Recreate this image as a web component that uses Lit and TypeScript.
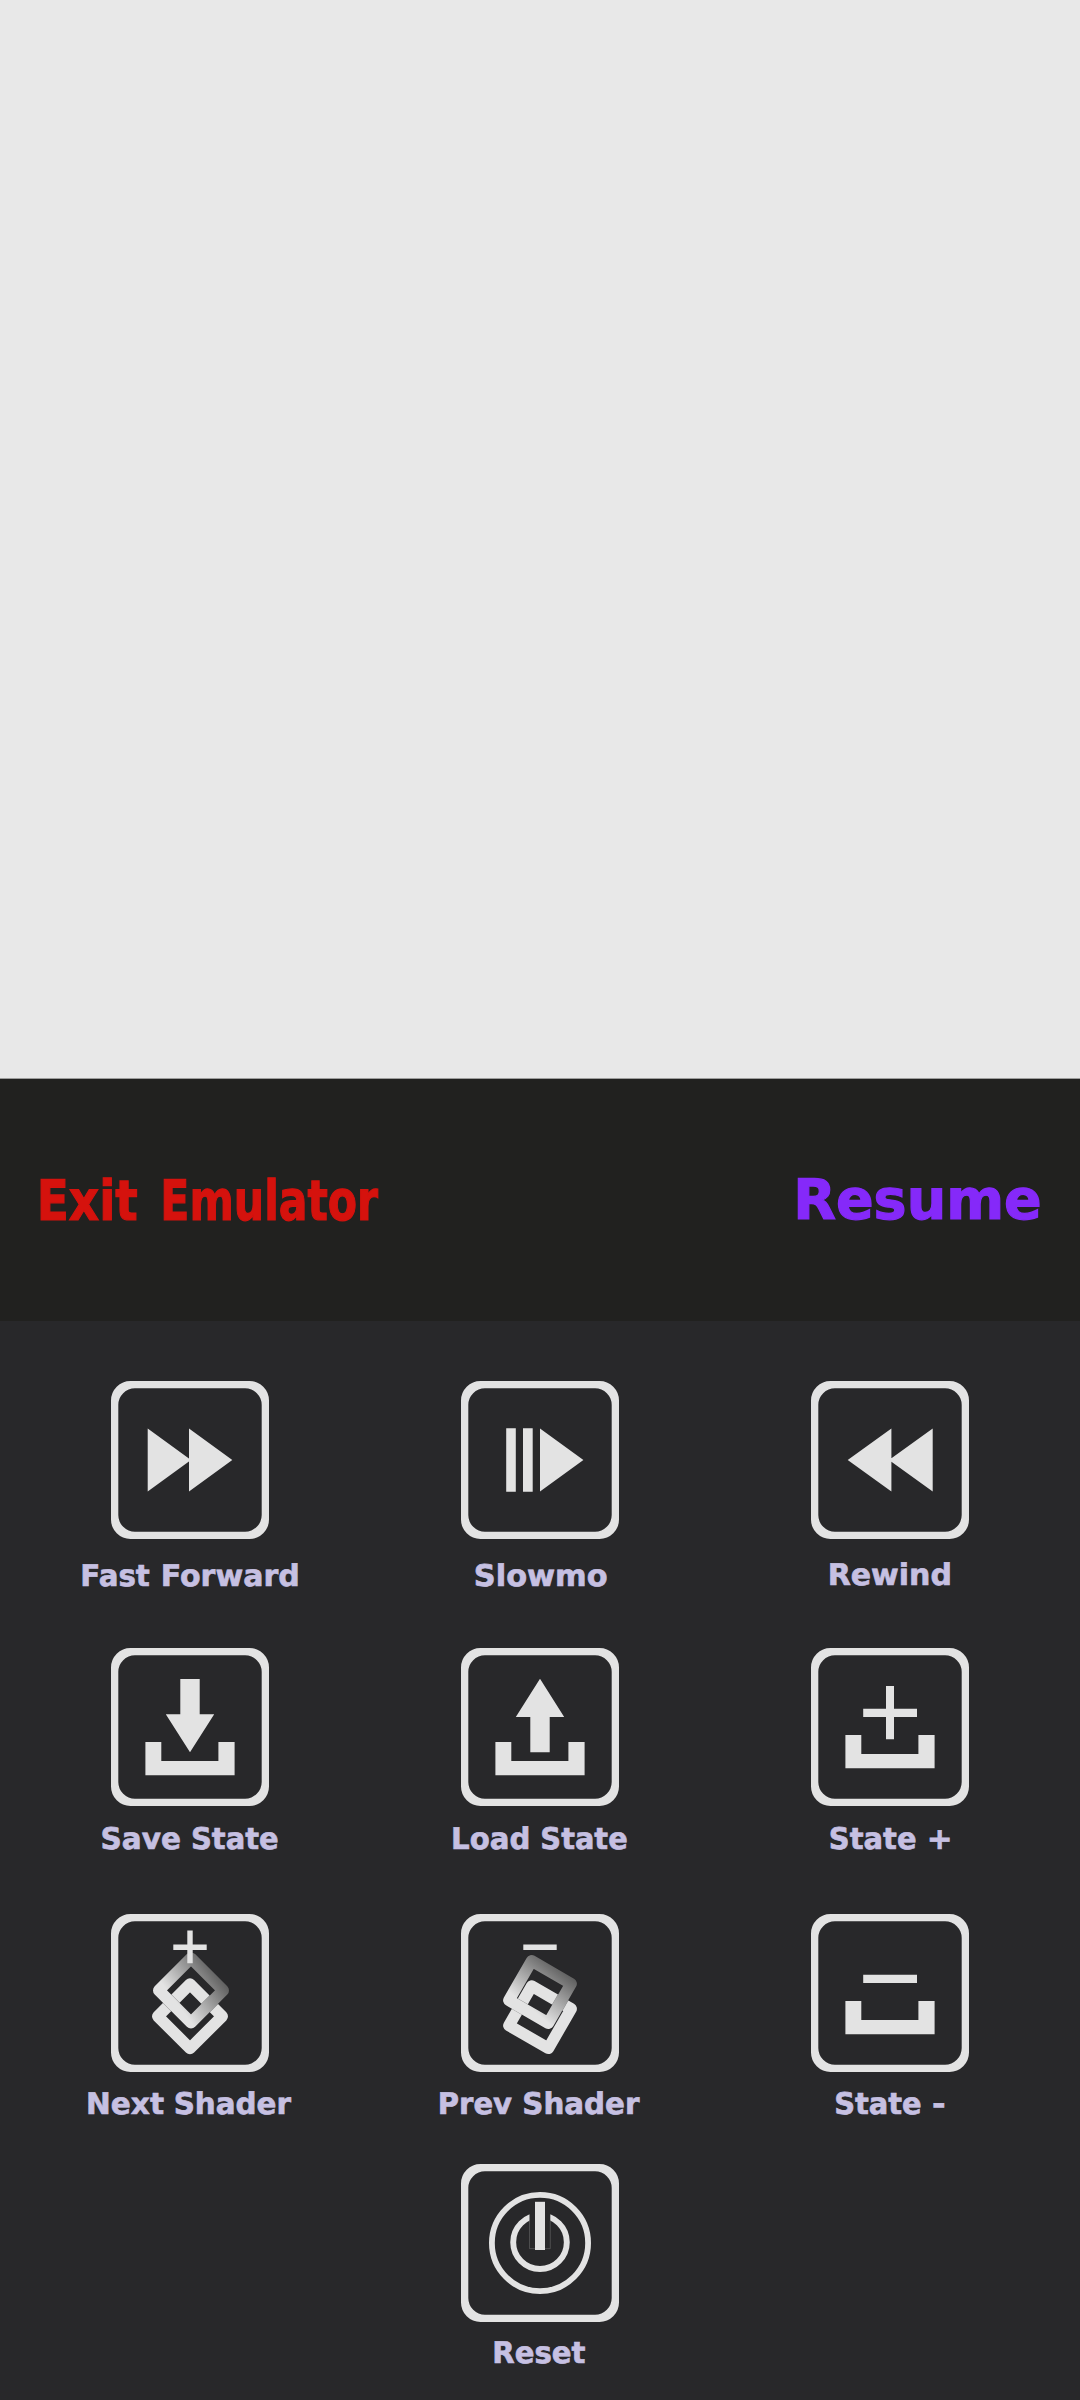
import { LitElement, html, css, svg, nothing, SVGTemplateResult } from "lit";
import { customElement, property } from "lit/decorators.js";

const FAMILY = '"DejaVu Sans", Verdana, sans-serif';

/** One word whose ink spans from x0 to x1. */
interface Run {
  text: string;
  x0: number;
  x1: number;
}

interface Command {
  icon: string;
  runs: Run[];
  baseline: number;
}

const pen = document.createElement("canvas").getContext("2d")!;

/** Distance of the ink's edges from the origin, in ems. */
function inkOf(text: string): [number, number] {
  pen.font = `bold 200px ${FAMILY}`;
  const m = pen.measureText(text);
  return [m.actualBoundingBoxLeft / 200, m.actualBoundingBoxRight / 200];
}

function drawRun(run: Run, size: number, baseline: number): SVGTemplateResult {
  const [left, right] = inkOf(run.text);
  const weight = size * 0.022;
  const inset = weight / 2 + size * 0.012;
  const scale = (run.x1 - run.x0 - inset * 2) / ((left + right) * size);
  const x = run.x0 + inset + left * size * scale;
  return svg`<text
    font-size=${size}
    stroke-width=${weight}
    transform=${`translate(${x} ${baseline - weight / 2}) scale(${scale} 1)`}
  >${run.text} </text>`;
}

@customElement("fitted-text")
export class FittedText extends LitElement {
  @property({ attribute: false }) runs: Run[] = [];
  @property({ type: Number }) width = 100;
  @property({ type: Number }) height = 40;
  @property({ type: Number }) size = 30;
  @property({ type: Number }) baseline = 30;

  static styles = css`
    :host {
      display: block;
    }
    .line {
      display: block;
      overflow: visible;
      fill: currentColor;
      stroke: currentColor;
      font-family: "DejaVu Sans", Verdana, sans-serif;
      font-weight: 700;
      text-rendering: geometricPrecision;
    }
  `;

  render() {
    return html`<svg class="line" width=${this.width} height=${this.height}>
      ${this.runs.map((r) => drawRun(r, this.size, this.baseline))}
    </svg>`;
  }
}

const tray = (y: number) =>
  svg`<path d=${`M34.4 ${y}H50.3V${y + 19}H107.4V${y}H123.6V${y + 33.2}H34.4Z`} />`;

const square = "M0 -32.2L32.2 0L0 32.2L-32.2 0Z";

const shader = (cx: number, cy: number, bx: number, by: number, turn: number) => svg`
  <defs>
    <linearGradient id="fade" gradientUnits="userSpaceOnUse" x1="-15.2" y1="11.4" x2="26.2" y2="-19.6">
      <stop offset="0" stop-color="#e3e3e3" />
      <stop offset="1" stop-color="#5c5c5c" />
    </linearGradient>
  </defs>
  <g fill="none" stroke-width="11.6" stroke-linejoin="round">
    <path d=${square} stroke="#e3e3e3" transform=${`translate(${bx} ${by}) rotate(${turn})`} />
    <g transform=${`translate(${cx} ${cy}) rotate(${turn})`}>
      <path d=${square} stroke="#28282a" stroke-width="12.2" stroke-opacity="0.5" />
      <path d=${square} stroke="url(#fade)" />
    </g>
  </g>`;

const glyphs: Record<string, SVGTemplateResult> = {
  forward: svg`<path d="M36.7 47.6L80 79L36.7 110.4ZM78 47.6L121.3 79L78 110.4Z" />`,
  slowmo: svg`<path d="M45.2 47.2H54.8V110.8H45.2ZM62 47.2H71.7V110.8H62ZM79 47.6L122.4 79L79 110.4Z" />`,
  rewind: svg`<path d="M80.4 47.6L36.7 79L80.4 110.4ZM121.7 47.6L78 79L121.7 110.4Z" />`,
  save: svg`<path d="M69.3 31H88.7V66.2H103.2L79 104.3L54.8 66.2H69.3Z" />${tray(94)}`,
  load: svg`<path d="M79 30.8L103.2 69H88.7V104.2H69.3V69H54.8Z" />${tray(94)}`,
  plus: svg`<path d="M75 38H83V60.8H106V69H83V91.3H75V69H52.2V60.8H75Z" />${tray(87)}`,
  minus: svg`<path d="M52.2 60.8H106V69H52.2Z" />${tray(87)}`,
  next: svg`${shader(80, 76.4, 79, 102.3, 0)}
    <path d="M76.3 16.4H81.7V30.4H95.7V35.9H81.7V49.3H76.3V35.9H62.3V30.4H76.3Z" />`,
  prev: svg`${shader(79, 78, 79, 103.2, -15)}<path d="M62.3 30.4H95.7V35.9H62.3Z" />`,
  reset: svg`
    <circle cx="79" cy="79" r="48.1" fill="none" stroke="#e3e3e3" stroke-width="5.8" />
    <circle cx="79" cy="78.2" r="26.8" fill="none" stroke="#e3e3e3" stroke-width="5.9" />
    <path d="M68.5 36H89.3V84.6H68.5Z" fill="#28282a" />
    <path d="M68.5 57V84.6H89.3V57" fill="none" stroke="#e3e3e3" stroke-width="0.4" stroke-opacity="0.5" />
    <path d="M74 37.8H84V86H74Z" />`,
};

@customElement("command-icon")
export class CommandIcon extends LitElement {
  @property() name = "";

  static styles = css`
    :host {
      display: block;
    }
    .icon {
      display: block;
      fill: #e3e3e3;
    }
  `;

  render() {
    return html`<svg class="icon" width="158" height="158" viewBox="0 0 158 158">
      <path
        fill-rule="evenodd"
        d="M19.5 0H138.5A19.5 19.5 0 0 1 158 19.5V138.5A19.5 19.5 0 0 1 138.5 158H19.5A19.5 19.5 0 0 1 0 138.5V19.5A19.5 19.5 0 0 1 19.5 0ZM24 7.3A16.7 16.7 0 0 0 7.3 24V134A16.7 16.7 0 0 0 24 150.7H134A16.7 16.7 0 0 0 150.7 134V24A16.7 16.7 0 0 0 134 7.3Z"
      />
      ${glyphs[this.name] ?? nothing}
    </svg>`;
  }
}

const word = (text: string, x0: number, x1: number): Run => ({ text, x0, x1 });

/* Label spans are measured from the left edge of the 350px cell. */
const commands: Command[] = [
  { icon: "forward", runs: [word("Fast", 67.3, 135), word("Forward", 147.7, 283)], baseline: 47.7 },
  { icon: "slowmo", runs: [word("Slowmo", 110.3, 242)], baseline: 47.7 },
  { icon: "rewind", runs: [word("Rewind", 114.7, 235.2)], baseline: 46.6 },
  { icon: "save", runs: [word("Save", 87, 165.3), word("State", 177.3, 263)], baseline: 43.2 },
  { icon: "load", runs: [word("Load", 88, 163.7), word("State", 176.7, 262)], baseline: 43.2 },
  { icon: "plus", runs: [word("State", 115.2, 200.8), word("+", 214.2, 235)], baseline: 43.2 },
  { icon: "next", runs: [word("Next", 73, 149.2), word("Shader", 160, 276.8)], baseline: 42 },
  { icon: "prev", runs: [word("Prev", 74.7, 147.4), word("Shader", 158.7, 275.2)], baseline: 42 },
  { icon: "minus", runs: [word("State", 120.5, 206), word("-", 218, 229.7)], baseline: 42 },
  { icon: "reset", runs: [word("Reset", 129.3, 220.7)], baseline: 41.6 },
];

const exit: Run[] = [word("Exit", 39.7, 138.2), word("Emulator", 162.9, 379.5)];
const resume: Run[] = [word("Resume", 256.9, 500.3)];

@customElement("app-root")
export class AppRoot extends LitElement {
  static styles = css`
    :host {
      display: block;
    }
    .page {
      display: flex;
      flex-direction: column;
      box-sizing: border-box;
      width: 1080px;
      height: 2400px;
      overflow: hidden;
      background: #28282a;
    }
    .screen {
      box-sizing: border-box;
      height: 1079px;
      background: #e8e8e8;
      border-bottom: 1px solid #9d9d9c;
    }
    .bar {
      display: flex;
      justify-content: space-between;
      height: 242px;
      background: #21211f;
    }
    .exit {
      color: #d5120d;
    }
    .resume {
      color: #8529f9;
    }
    .pad {
      display: grid;
      grid-template-columns: repeat(3, 350px);
      grid-template-rows: 267px 265.6px 250.4px 236px;
      justify-content: center;
      padding-top: 60px;
    }
    .cell {
      display: flex;
      flex-direction: column;
      align-items: center;
    }
    .cell:last-child {
      grid-column: 2;
    }
    .label {
      color: #c6c0e2;
    }
  `;

  render() {
    return html`<main class="page">
      <section class="screen"></section>
      <nav class="bar">
        <fitted-text class="exit" .runs=${exit} .width=${540} .height=${242} .size=${55.6} .baseline=${142}></fitted-text>
        <fitted-text class="resume" .runs=${resume} .width=${540} .height=${242} .size=${55.6} .baseline=${141}></fitted-text>
      </nav>
      <section class="pad">
        ${commands.map(
          (c) => html`<div class="cell">
            <command-icon .name=${c.icon}></command-icon>
            <fitted-text
              class="label"
              .runs=${c.runs}
              .width=${350}
              .height=${60}
              .size=${29.8}
              .baseline=${c.baseline}
            ></fitted-text>
          </div>`
        )}
      </section>
    </main>`;
  }
}
